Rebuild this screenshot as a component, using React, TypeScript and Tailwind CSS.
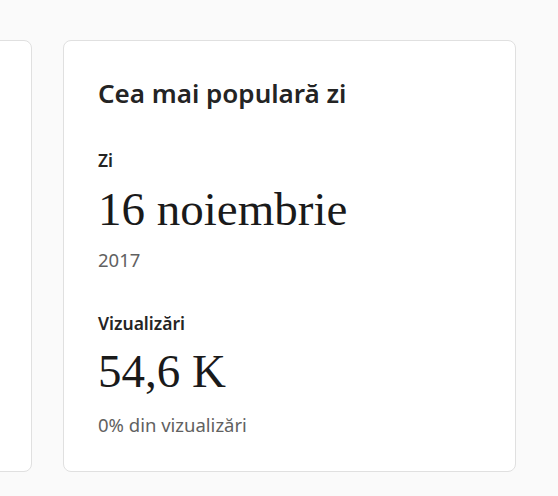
export default function App() {
  const sans = { fontFamily: '"Noto Sans", "Open Sans", sans-serif' };
  return (
    <div className="w-[558px] h-[496px] bg-[#fafafa] overflow-hidden">
      <div className="flex justify-end gap-[31px] pt-[40px] pr-[42px]">
        <div className="shrink-0 w-[453px] h-[432px] bg-white border border-[#e0e0e0] rounded-lg" />
        <div
          className="shrink-0 w-[453px] h-[432px] bg-white border border-[#e0e0e0] rounded-lg pl-[34px] pt-[36px] text-[#242424]"
          style={sans}
        >
          <div className="text-[26px] leading-[32px] font-semibold">Cea mai populară zi</div>
          <div className="mt-[39px] text-[17.5px] leading-[24px] font-semibold">Zi</div>
          <div className="mt-[9px] text-[47px] leading-[56px] font-['Liberation_Serif',serif] text-[#1a1a1a]">
            16 noiembrie
          </div>
          <div className="mt-[11px] text-[18.5px] leading-[24px] text-[#616161]">2017</div>
          <div className="mt-[39px] text-[17.5px] leading-[24px] font-semibold">Vizualizări</div>
          <div className="mt-[8px] text-[47px] leading-[56px] font-['Liberation_Serif',serif] text-[#1a1a1a]">
            54,6 K
          </div>
          <div className="mt-[14px] text-[18.5px] leading-[24px] text-[#616161]">0% din vizualizări</div>
        </div>
      </div>
    </div>
  );
}
